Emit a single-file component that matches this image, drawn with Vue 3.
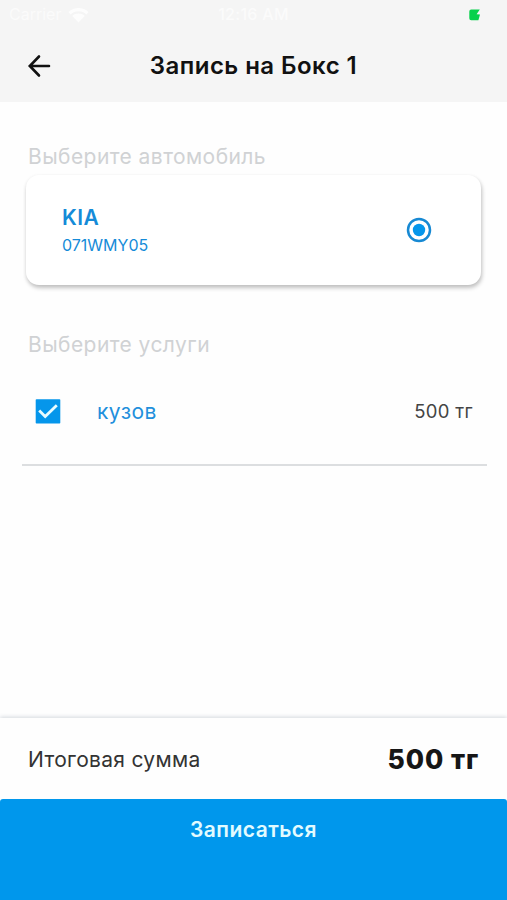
<script setup>
import { ref, computed } from 'vue'

const cars = [{ name: 'KIA', plate: '071WMY05' }]
const selectedPlate = ref('071WMY05')
const services = ref([{ name: 'кузов', price: 500, checked: true }])
const total = computed(() =>
  services.value.reduce((sum, s) => sum + (s.checked ? s.price : 0), 0)
)
</script>

<template>
  <div class="screen">
    <header class="header">
      <div class="status">
        <div class="carrier">
          <span>Carrier</span>
          <svg class="wifi" viewBox="0 0 20 16">
            <path d="M0 5C5.5-.4 14.500-.4 20 5l-2.200 2.400C13.500 3.300 6.500 3.300 2.200 7.400zM3.800 9c3.500-3.200 8.900-3.200 12.400 0L10 15.500z" />
          </svg>
        </div>
        <span class="clock">12:16 AM</span>
        <div class="power">
          <svg class="battery" viewBox="0 0 12 12">
            <path d="M2.200.500H10.800L7.600 5.200 11 5.600 9.400 11.200H2.200Q.300 11.200.300 9.300V2.400Q.300.500 2.200.500Z" />
          </svg>
        </div>
      </div>
      <div class="nav">
        <svg class="back" viewBox="0 0 24 24">
          <path d="M12 2.500 2.800 12l9.200 9.500M3 12H22" />
        </svg>
        <h1 class="title">Запись на Бокс 1</h1>
      </div>
    </header>

    <main class="content">
      <h2 class="label car-label">Выберите автомобиль</h2>
      <div v-for="car in cars" :key="car.plate" class="card" @click="selectedPlate = car.plate">
        <div class="car">
          <span class="car-name">{{ car.name }}</span>
          <span class="car-plate">{{ car.plate }}</span>
        </div>
        <svg class="radio" viewBox="0 0 26 26">
          <circle class="ring" cx="13" cy="13" r="11" />
          <circle v-if="selectedPlate === car.plate" class="dot" cx="13" cy="13" r="6.200" />
        </svg>
      </div>

      <h2 class="label service-label">Выберите услуги</h2>
      <div v-for="s in services" :key="s.name" class="service" @click="s.checked = !s.checked">
        <svg class="checkbox" viewBox="0 0 26 25">
          <rect x=".7" y=".2" width="24.600" height="24.300" rx=".8" />
          <path v-if="s.checked" d="M4.200 11.600 10.200 17.600 21.800 6.300" />
        </svg>
        <span class="service-name">{{ s.name }}</span>
        <span class="service-price">{{ s.price }} тг</span>
      </div>
    </main>

    <footer class="footer">
      <div class="total">
        <span class="total-label">Итоговая сумма</span>
        <span class="total-value">{{ total }} тг</span>
      </div>
      <button class="submit">Записаться</button>
    </footer>
  </div>
</template>

<style>
body {
  margin: 0;
  background: #fefefe;
}
</style>

<style scoped>
.screen {
  display: flex;
  flex-direction: column;
  width: 507px;
  height: 900px;
  overflow: hidden;
  background: #fefefe;
  font-family: Inter, Roboto, sans-serif;
  white-space: nowrap;
}
.header {
  box-sizing: border-box;
  height: 102px;
  background: #f5f5f5;
}
.status {
  display: grid;
  grid-template-columns: 1fr auto 1fr;
  align-items: center;
  height: 29px;
  padding: 0 26px 0 9px;
  color: #fbfbfb;
  font-size: 16px;
  line-height: 29px;
}
.carrier {
  display: flex;
  align-items: center;
  gap: 7px;
}
.wifi {
  width: 21px;
  height: 16px;
  fill: #fdfdfd;
}
.clock {
  padding-left: 17px;
  font-weight: 500;
  letter-spacing: 0.300px;
}
.power {
  display: flex;
  justify-content: flex-end;
}
.battery {
  width: 12px;
  height: 12px;
  fill: #08d14c;
}
.nav {
  display: grid;
  grid-template-columns: 24px 1fr 24px;
  align-items: center;
  height: 73px;
  padding: 0 27px;
}
.back {
  width: 24px;
  height: 24px;
  fill: none;
  stroke: #111;
  stroke-width: 2.600;
  stroke-linecap: round;
}
.title {
  margin: 0;
  color: #111;
  font-size: 24px;
  font-weight: 600;
  line-height: 31px;
  letter-spacing: 0.450px;
  text-align: center;
}
.content {
  flex: 1;
}
.label {
  margin: 0;
  padding-left: 28px;
  color: #d0d2d4;
  font-size: 21px;
  font-weight: 400;
  line-height: 28px;
  letter-spacing: 0.430px;
}
.car-label {
  margin-top: 41px;
}
.card {
  box-sizing: border-box;
  display: flex;
  align-items: center;
  justify-content: space-between;
  width: 455px;
  height: 110px;
  margin: 4px 0 0 26px;
  padding: 0 49px 0 36px;
  border-radius: 13px;
  background: #fff;
  box-shadow: 1px 3px 4px rgba(0, 0, 0, 0.22), 0 1px 4px rgba(0, 0, 0, 0.06);
  color: #158bd8;
}
.car {
  display: flex;
  flex-direction: column;
}
.car-name {
  padding-top: 1px;
  font-size: 21px;
  font-weight: 600;
  line-height: 29px;
  letter-spacing: 0.400px;
}
.car-plate {
  font-size: 16px;
  line-height: 26px;
}
.radio {
  width: 26px;
  height: 26px;
}
.ring {
  fill: none;
  stroke: #1789d3;
  stroke-width: 2.500;
}
.dot {
  fill: #0596eb;
}
.service-label {
  margin-top: 46px;
}
.service {
  display: flex;
  align-items: center;
  height: 105px;
  margin: 0 20px 0 22px;
  padding: 0 14px 0 13px;
  border-bottom: 2px solid #dcdee0;
}
.checkbox {
  width: 26px;
  height: 25px;
}
.checkbox rect {
  fill: #0596eb;
}
.checkbox path {
  fill: none;
  stroke: #e9fcff;
  stroke-width: 2.800;
}
.service-name {
  margin-left: 36px;
  color: #218fdc;
  font-size: 21px;
  letter-spacing: 0.450px;
}
.service-price {
  margin-left: auto;
  padding-bottom: 2px;
  color: #444;
  font-size: 18.500px;
  letter-spacing: 0.350px;
}
.footer {
  height: 182px;
  background: #fefefe;
  box-shadow: 0 -1px 4px rgba(80, 100, 120, 0.24);
}
.total {
  display: flex;
  align-items: center;
  justify-content: space-between;
  height: 81px;
  padding: 0 28px;
}
.total-label {
  padding-top: 1px;
  color: #333;
  font-size: 21px;
  letter-spacing: 0.300px;
}
.total-value {
  padding-top: 1px;
  color: #161616;
  font-size: 26.500px;
  font-weight: 800;
  letter-spacing: 0.900px;
}
.submit {
  display: flex;
  align-items: flex-start;
  justify-content: center;
  width: 507px;
  height: 101px;
  padding: 16px 0 0;
  border: 0;
  border-radius: 3px 3px 0 0;
  background: #0097ec;
  color: #e2fbff;
  font-family: inherit;
  font-size: 21px;
  font-weight: 600;
  line-height: 30px;
  letter-spacing: 0.450px;
}
</style>
